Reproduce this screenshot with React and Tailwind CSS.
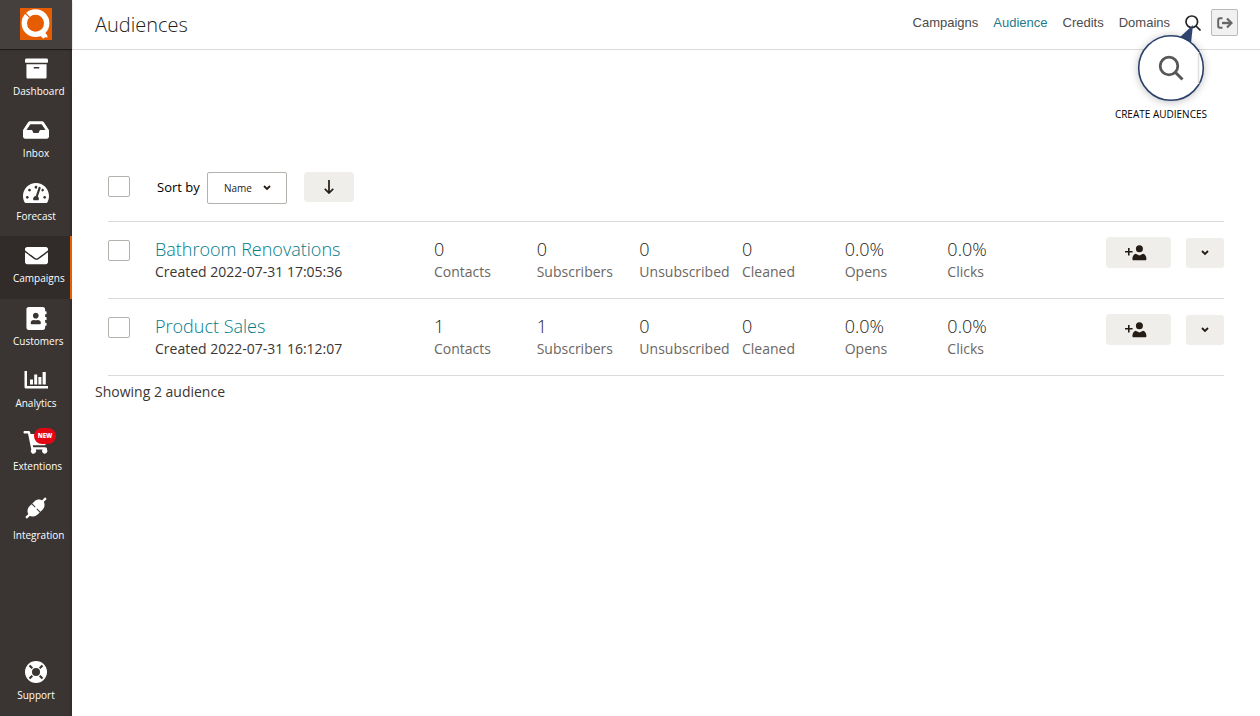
import { FaArchive, FaInbox, FaTachometerAlt, FaEnvelope, FaAddressBook } from "react-icons/fa";

function LogoIcon() {
  return (
    <svg viewBox="0 0 32 32" className="h-8 w-8" aria-hidden="true">
      <rect width="32" height="32" fill="#e65c00" />
      <circle cx="15.5" cy="15.2" r="11.2" fill="none" stroke="#fff" strokeWidth="5.400" />
      <path d="M5.200 5l4.300 4.300" stroke="#e65c00" strokeWidth="1.200" />
      <path d="M19.500 27.300l4 3.500 1.300-1.600 2.800.4-.5-2.700-2.600-2.900z" fill="#fff" />
    </svg>
  );
}

function ChartIcon() {
  return (
    <svg viewBox="0 0 24 18" className="h-[18px] w-6" fill="#fff" aria-hidden="true">
      <path d="M.5 0h2.500v15H24v2.500H2a1.500 1.500 0 0 1-1.500-1.500z" />
      <path d="M6 8.500h3v5H6zM10.200 3.500h3v10h-3zM14.400 6h3v7.500h-3zM18.600 1h3.200v12.500h-3.200z" />
    </svg>
  );
}

function CartIcon() {
  return (
    <svg viewBox="0 0 26 24" className="h-6 w-[26px]" fill="#fff" aria-hidden="true">
      <path d="M.5 1.200C.5.500 1 0 1.700 0h4.100c.6 0 1.100.4 1.300 1L7.500 3H24c.7 0 1.200.6 1 1.300l-2.300 9c-.1.500-.6.900-1.100.9H9.800l.4 2h12c1 0 1.800.8 1.800 1.800v.6a2.700 2.700 0 1 1-4.600 0h-6.600a2.700 2.700 0 1 1-4.500-.2L5 2.600H1.700C1 2.600.5 2 .5 1.200z" />
    </svg>
  );
}

function PlugIcon() {
  return (
    <svg viewBox="0 0 24 24" className="h-6 w-6" aria-hidden="true">
      <g transform="rotate(-45 12 12)">
        <path d="M-2 12h28" stroke="#fff" strokeWidth="2.200" />
        <path d="M11.500 6.200v11.600H8.500C5 17.800 2.200 15.200 2.200 12S5 6.200 8.500 6.200zM12.500 6.200h3c3.500 0 6.300 2.600 6.300 5.800s-2.800 5.800-6.300 5.800h-3z" fill="#fff" />
      </g>
    </svg>
  );
}

function SupportIcon() {
  return (
    <svg viewBox="0 0 24 24" className="h-6 w-6" aria-hidden="true">
      <circle cx="12" cy="12" r="11" fill="#fff" />
      <circle cx="12" cy="12" r="4" fill="#3a3532" />
      <path d="M5.500 5.500l2.800 2.800M18.500 5.500l-2.800 2.800M5.500 18.500l2.800-2.800M18.500 18.500l-2.800-2.800" stroke="#3a3532" strokeWidth="2.200" />
    </svg>
  );
}

function LogoutIcon() {
  return (
    <svg viewBox="0 0 16 12" className="h-3 w-4" fill="none" stroke="#666" strokeWidth="2" aria-hidden="true">
      <path d="M5.500 1.200H3A1.800 1.800 0 0 0 1.200 3v6A1.800 1.800 0 0 0 3 10.800h2.500" />
      <path d="M5 6h8" strokeWidth="2.400" />
      <path d="M10 1.500L14.500 6 10 10.500" strokeWidth="2.200" />
    </svg>
  );
}

function AddPersonIcon() {
  return (
    <svg viewBox="0 0 22 16" className="h-4 w-[22px]" fill="#241c15" aria-hidden="true">
      <path d="M0 6h3V3h1.600v3h3v1.600h-3v3H3v-3H0z" />
      <circle cx="14.400" cy="3.800" r="3.500" />
      <path d="M7.400 14c0-2.600 1-4.500 3.200-5.200l3.800 1.700 3.800-1.700c2.200.7 3.200 2.600 3.200 5.200 0 .8-.4 1.300-1.200 1.300H8.600c-.8 0-1.200-.5-1.200-1.300z" />
    </svg>
  );
}

function Chevron() {
  return (
    <svg viewBox="0 0 8 6" className="h-[6px] w-2" aria-hidden="true">
      <path d="M1 1l3 3 3-3" fill="none" stroke="#241c15" strokeWidth="1.800" />
    </svg>
  );
}

const items = [
  { label: "Dashboard", icon: <FaArchive className="h-[23px] w-[23px]" /> },
  { label: "Inbox", icon: <FaInbox className="h-[26px] w-[26px]" /> },
  { label: "Forecast", icon: <FaTachometerAlt className="h-[26px] w-[26px]" /> },
  { label: "Campaigns", icon: <FaEnvelope className="h-[23px] w-[23px]" />, active: true },
  { label: "Customers", icon: <FaAddressBook className="h-[23px] w-[23px]" /> },
  { label: "Analytics", icon: <ChartIcon /> },
  { label: "Extentions", icon: <CartIcon />, badge: "NEW" },
  { label: "Integration", icon: <PlugIcon />, tall: true },
];

function SideItem({ label, icon, active, badge, tall }) {
  return (
    <a
      href="#"
      className={
        "flex flex-col px-[13px] text-[10px] leading-[14px] font-medium text-white " +
        (tall ? "h-[69px] pt-[9px] " : "pt-[6px] odd:h-[62px] even:h-[63px] ") +
        (active ? "border-r-2 border-[#e85c04] bg-[#312c29] pr-[11px]" : "")
      }
    >
      <span className="relative flex h-[26px] w-[46px] items-center justify-center">
        {icon}
        {badge && (
          <span className="absolute -top-[2px] left-[21px] flex h-4 w-[22px] items-center justify-center rounded-full bg-[#e30613] text-[6px] font-extrabold">
            {badge}
          </span>
        )}
      </span>
      <span className={"flex min-w-[46px] justify-center self-start whitespace-nowrap " + (tall ? "mt-[7px]" : "mt-[3px]")}>{label}</span>
    </a>
  );
}

const audiences = [
  { name: "Bathroom Renovations", created: "2022-07-31 17:05:36", stats: ["0", "0", "0", "0", "0.0%", "0.0%"] },
  { name: "Product Sales", created: "2022-07-31 16:12:07", stats: ["1", "1", "0", "0", "0.0%", "0.0%"] },
];
const statLabels = ["Contacts", "Subscribers", "Unsubscribed", "Cleaned", "Opens", "Clicks"];

const checkbox = "block h-[21px] w-[22px] appearance-none rounded-[2px] border border-[#b5b2ae] bg-white";

function AudienceRow({ name, created, stats }) {
  return (
    <tr className="h-[77px] align-top [&>td]:border-b [&>td]:border-[#dadada]">
      <td className="pt-[18px]">
        <input type="checkbox" aria-label={name} className={checkbox} />
      </td>
      <td className="pt-[15px]">
        <a href="#" className="block text-[18px] leading-6 font-light text-[#007c89]">{name}</a>
        <div className="text-[14px] leading-[21px] text-[#3b3632]">Created {created}</div>
      </td>
      {stats.map((value, i) => (
        <td key={statLabels[i]} className="pt-[15px] whitespace-nowrap">
          <div className="text-[18px] leading-6 font-light text-[#241c15]">{value}</div>
          <div className="text-[14px] leading-[21px] text-[#6b6662]">{statLabels[i]}</div>
        </td>
      ))}
      <td className="pt-[15px]">
        <div className="flex justify-end gap-[15px]">
          <button aria-label="Add contact" className="flex h-[31px] w-[65px] items-center justify-center rounded-[4px] bg-[#efeeea] pr-[6px]">
            <AddPersonIcon />
          </button>
          <button aria-label="More actions" className="mt-px flex h-[30px] w-[38px] items-center justify-center rounded-[3px] bg-[#efeeea]">
            <Chevron />
          </button>
        </div>
      </td>
    </tr>
  );
}

export default function App() {
  return (
    <div className="flex min-h-screen bg-white font-['Open_Sans',sans-serif] text-[#241c15]">
      <aside className="flex w-[72px] shrink-0 flex-col bg-[#3a3532] shadow-[inset_-3px_0_3px_-2px_rgba(0,0,0,0.25)]">
        <a href="#" aria-label="Home" className="flex h-[49px] items-start justify-center bg-[#45403d] pt-2 shadow-[0_1px_1px_rgba(0,0,0,0.45)]">
          <LogoIcon />
        </a>
        <nav>
          {items.map((item) => <SideItem key={item.label} {...item} />)}
        </nav>
        <div className="mt-auto pb-px">
          <SideItem label="Support" icon={<SupportIcon />} />
        </div>
      </aside>

      <div className="min-w-0 flex-1">
        <header className="flex h-[50px] items-center justify-between border-b border-[#dadada] pr-[22px] pl-[23px]">
          <h1 className="text-[20px] leading-[30px] font-light">Audiences</h1>
          <nav className="flex items-center gap-[15px] pb-1 font-['Liberation_Sans',Arial,sans-serif] text-[13px] text-[#4b4b4b]">
            <a href="#">Campaigns</a>
            <a href="#" className="text-[#1f7a8c]">Audience</a>
            <a href="#">Credits</a>
            <a href="#">Domains</a>
            <div className="flex items-center gap-[10px]">
              <div className="relative h-4 w-4">
                <button aria-label="Search" className="block">
                  <svg viewBox="0 0 16 16" className="h-4 w-4" fill="none" stroke="#222" strokeWidth="1.700" aria-hidden="true">
                    <circle cx="6.800" cy="6.800" r="5.800" />
                    <path d="M11 11l4.500 4.500" />
                  </svg>
                </button>
                <svg viewBox="0 0 90 96" className="pointer-events-none absolute -top-[3px] -left-[59px] h-24 w-[90px] max-w-none" aria-hidden="true">
                  <defs>
                    <filter id="glow" x="-30%" y="-30%" width="160%" height="160%">
                      <feGaussianBlur stdDeviation="4" />
                    </filter>
                  </defs>
                  <circle cx="45" cy="57" r="33" fill="#000" opacity=".25" filter="url(#glow)" />
                  <path d="M67 13L54 25l11 6z" fill="#2f4570" />
                  <circle cx="45" cy="56" r="32.300" fill="#fff" stroke="#2b4169" strokeWidth="1.600" />
                  <path d="M72.500 40v32" stroke="#ddd" strokeWidth="1.500" />
                  <circle cx="43" cy="54" r="8.800" fill="none" stroke="#575757" strokeWidth="2.800" />
                  <path d="M49.500 60.500l7 7" stroke="#575757" strokeWidth="3" />
                </svg>
              </div>
              <button aria-label="Log out" className="flex h-[27px] w-[27px] items-center justify-center rounded-[2px] border border-[#b9b9b9] bg-[#f1f1f1]">
                <LogoutIcon />
              </button>
            </div>
          </nav>
        </header>

        <main className="pr-9 pl-[23px]">
          <div className="flex h-[122px] items-end justify-end pr-[17px] pb-[51px]">
            <a href="#" className="text-[10px] leading-[14px] text-black">CREATE AUDIENCES</a>
          </div>

          <div className="ml-[13px]">
            <div className="flex h-[50px] items-start border-b border-[#dadada]">
              <input type="checkbox" aria-label="Select all" className={checkbox + " mt-1"} />
              <label htmlFor="sort" className="ml-[27px] w-[50px] pt-[5px] text-[13px] leading-5 whitespace-nowrap text-black">Sort by</label>
              <div className="relative">
                <select id="sort" className="h-8 w-20 appearance-none rounded-[2px] border border-[#b5b2ae] bg-white pl-4 text-[10px] font-medium">
                  <option>Name</option>
                </select>
                <span className="pointer-events-none absolute top-[13px] right-4"><Chevron /></span>
              </div>
              <button aria-label="Sort direction" className="ml-[17px] flex h-[30px] w-[50px] items-center justify-center rounded-[4px] bg-[#efeeea]">
                <svg viewBox="0 0 10 14" className="h-[14px] w-[10px]" fill="none" stroke="#241c15" strokeWidth="1.700" aria-hidden="true">
                  <path d="M5 0v13M.8 8.800L5 13l4.200-4.200" />
                </svg>
              </button>
            </div>
            <table className="w-full table-fixed border-separate border-spacing-0 text-left">
              <colgroup>
                <col className="w-[47px]" />
                <col className="w-[279px]" />
                {statLabels.map((l) => <col key={l} className="w-[9.200%]" />)}
                <col />
              </colgroup>
              <tbody>
                {audiences.map((a) => <AudienceRow key={a.name} {...a} />)}
              </tbody>
            </table>
          </div>
          <p className="mt-[6px] text-[14px] leading-5 text-[#3b3632]">Showing 2 audience</p>
        </main>
      </div>
    </div>
  );
}
